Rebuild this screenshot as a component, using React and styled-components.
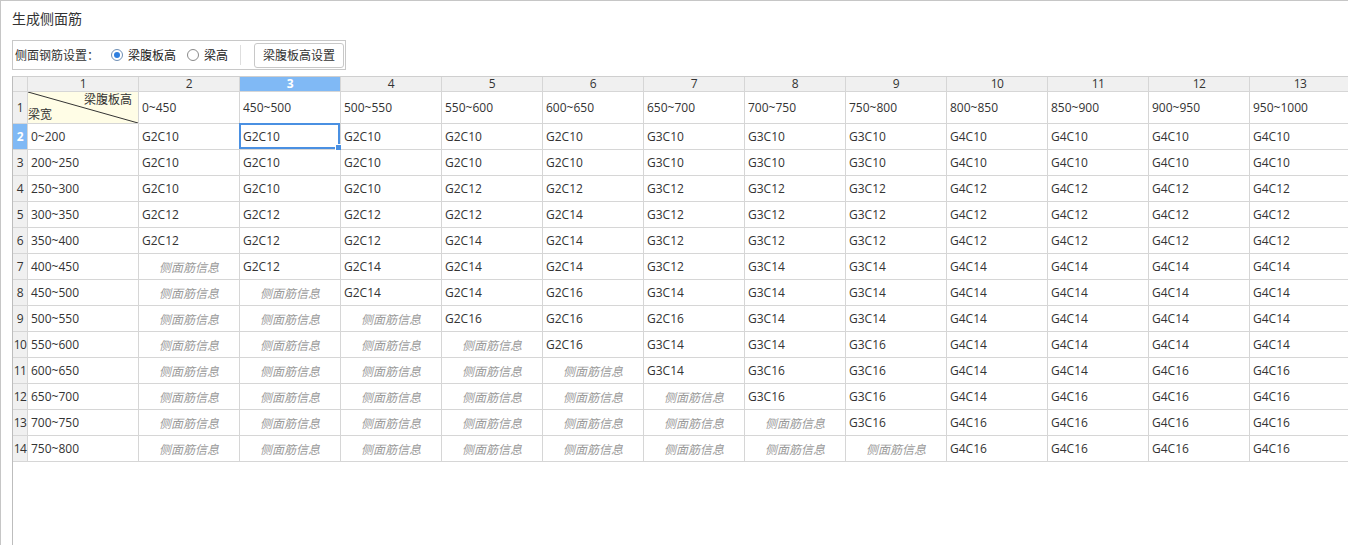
import React from "react";
import styled, { createGlobalStyle } from "styled-components";

const GlobalStyle = createGlobalStyle`
  html, body {
    margin: 0;
    padding: 0;
    background: #fff;
  }
  body {
    font-family: "Open Sans", "Noto Sans CJK SC", sans-serif;
    font-size: 12px;
    color: #333;
  }
  * { box-sizing: border-box; }
`;

const Root = styled.div`
  height: 100vh;
  display: flex;
  flex-direction: column;
  border-top: 1px solid #c6c6c6;
  border-left: 1px solid #c6c6c6;
  padding-left: 11px;
  overflow: hidden;
`;

const Title = styled.div`
  padding-top: 8px;
  line-height: 20px;
  font-size: 14px;
  color: #333;
`;

const Toolbar = styled.div`
  margin-top: 11px;
  align-self: flex-start;
  display: flex;
  align-items: center;
  height: 30px;
  padding: 0 1px 0 2px;
  border: 1px solid #c8c8c8;
`;

const Label = styled.span`
  color: #333;
  margin-right: 12px;
`;

const RadioOption = styled.label`
  display: flex;
  align-items: center;
  gap: 5px;
  margin-right: ${(p) => p.$gap || 0}px;
  color: #222;
`;

const RadioDot = styled.span`
  width: 12px;
  height: 12px;
  border-radius: 50%;
  border: 1px solid ${(p) => (p.$checked ? "#6f8fb5" : "#8a8a8a")};
  background: #fff;
  display: flex;
  align-items: center;
  justify-content: center;
  &::after {
    content: "";
    width: 6px;
    height: 6px;
    border-radius: 50%;
    background: ${(p) => (p.$checked ? "#2f7fdf" : "transparent")};
  }
`;

const Divider = styled.span`
  width: 1px;
  height: 20px;
  background: #dedede;
  margin: 0 13px 0 12px;
`;

const Button = styled.button`
  height: 25px;
  padding: 0 8px;
  border: 1px solid #c8c8c8;
  border-radius: 3px;
  background: #fff;
  font: inherit;
  color: #333;
`;

const Sheet = styled.div`
  flex: 1;
  margin-top: 6px;
  border-left: 1px solid #bdbdbd;
  border-top: 1px solid #cfcfcf;
  overflow: hidden;
`;

const Table = styled.div`
  display: grid;
  grid-template-columns: 15px 111px repeat(12, 101px);
  grid-template-rows: 15px 32px repeat(13, 26px);
  width: max-content;
`;

const Cell = styled.div`
  position: relative;
  display: flex;
  align-items: center;
  justify-content: ${(p) => (p.$center ? "center" : "flex-start")};
  padding: 0 3px;
  border-right: 1px solid #d6d6d6;
  border-bottom: 1px solid #d6d6d6;
  white-space: nowrap;
  color: ${(p) => (p.$muted ? "#9a9a9a" : "#333")};
  font-style: ${(p) => (p.$muted ? "italic" : "normal")};
`;

const HeadCell = styled(Cell)`
  justify-content: center;
  padding: 0;
  line-height: 14px;
  background: ${(p) => (p.$active ? "#80b9f5" : "#f0f0f0")};
  color: ${(p) => (p.$active ? "#fff" : "#333")};
  font-weight: ${(p) => (p.$active ? "bold" : "normal")};
  letter-spacing: -0.5px;
`;

const Corner = styled(Cell)`
  background: #fffde6;
  padding: 0;
  display: block;
`;

const CornerTop = styled.span`
  position: absolute;
  right: 6px;
  top: 1px;
  line-height: 14px;
`;

const CornerBottom = styled.span`
  position: absolute;
  left: 0;
  bottom: 1px;
  line-height: 14px;
`;

const Diagonal = styled.svg`
  position: absolute;
  inset: 0;
  width: 100%;
  height: 100%;
`;

const Selection = styled.div`
  position: absolute;
  inset: -1px 0 0 -1px;
  border: 2px solid #4a90e2;
  pointer-events: none;
  &::after {
    content: "";
    position: absolute;
    right: -4px;
    bottom: -4px;
    width: 5px;
    height: 5px;
    background: #4a90e2;
    border: 1px solid #fff;
  }
`;

const P = null;
const widths = ["0~200", "200~250", "250~300", "300~350", "350~400", "400~450", "450~500", "500~550", "550~600", "600~650", "650~700", "700~750", "750~800"];
const heights = ["0~450", "450~500", "500~550", "550~600", "600~650", "650~700", "700~750", "750~800", "800~850", "850~900", "900~950", "950~1000"];

const data = [
  ["G2C10", "G2C10", "G2C10", "G2C10", "G2C10", "G3C10", "G3C10", "G3C10", "G4C10", "G4C10", "G4C10", "G4C10"],
  ["G2C10", "G2C10", "G2C10", "G2C10", "G2C10", "G3C10", "G3C10", "G3C10", "G4C10", "G4C10", "G4C10", "G4C10"],
  ["G2C10", "G2C10", "G2C10", "G2C12", "G2C12", "G3C12", "G3C12", "G3C12", "G4C12", "G4C12", "G4C12", "G4C12"],
  ["G2C12", "G2C12", "G2C12", "G2C12", "G2C14", "G3C12", "G3C12", "G3C12", "G4C12", "G4C12", "G4C12", "G4C12"],
  ["G2C12", "G2C12", "G2C12", "G2C14", "G2C14", "G3C12", "G3C12", "G3C12", "G4C12", "G4C12", "G4C12", "G4C12"],
  [P, "G2C12", "G2C14", "G2C14", "G2C14", "G3C12", "G3C14", "G3C14", "G4C14", "G4C14", "G4C14", "G4C14"],
  [P, P, "G2C14", "G2C14", "G2C16", "G3C14", "G3C14", "G3C14", "G4C14", "G4C14", "G4C14", "G4C14"],
  [P, P, P, "G2C16", "G2C16", "G2C16", "G3C14", "G3C14", "G4C14", "G4C14", "G4C14", "G4C14"],
  [P, P, P, P, "G2C16", "G3C14", "G3C14", "G3C16", "G4C14", "G4C14", "G4C14", "G4C14"],
  [P, P, P, P, P, "G3C14", "G3C16", "G3C16", "G4C14", "G4C14", "G4C16", "G4C16"],
  [P, P, P, P, P, P, "G3C16", "G3C16", "G4C14", "G4C16", "G4C16", "G4C16"],
  [P, P, P, P, P, P, P, "G3C16", "G4C16", "G4C16", "G4C16", "G4C16"],
  [P, P, P, P, P, P, P, P, "G4C16", "G4C16", "G4C16", "G4C16"],
];

const activeCol = 3;
const activeRow = 2;

export default function App() {
  return (
    <>
      <GlobalStyle />
      <Root>
        <Title>生成侧面筋</Title>
        <Toolbar>
          <Label>侧面钢筋设置：</Label>
          <RadioOption $gap={11}>
            <RadioDot $checked />
            梁腹板高
          </RadioOption>
          <RadioOption>
            <RadioDot />
            梁高
          </RadioOption>
          <Divider />
          <Button>梁腹板高设置</Button>
        </Toolbar>
        <Sheet>
          <Table>
            <HeadCell />
            {Array.from({ length: 13 }, (_, i) => (
              <HeadCell key={i} $active={i + 1 === activeCol}>
                {i + 1}
              </HeadCell>
            ))}

            <HeadCell>1</HeadCell>
            <Corner>
              <Diagonal viewBox="0 0 110 31" preserveAspectRatio="none">
                <line x1="0" y1="0" x2="110" y2="31" stroke="#333" strokeWidth="1" />
              </Diagonal>
              <CornerTop>梁腹板高</CornerTop>
              <CornerBottom>梁宽</CornerBottom>
            </Corner>
            {heights.map((h) => (
              <Cell key={h}>{h}</Cell>
            ))}

            {widths.map((w, r) => (
              <React.Fragment key={w}>
                <HeadCell $active={r + 2 === activeRow}>{r + 2}</HeadCell>
                <Cell>{w}</Cell>
                {data[r].map((v, c) =>
                  v ? (
                    <Cell key={c}>
                      {v}
                      {r + 2 === activeRow && c + 2 === activeCol && <Selection />}
                    </Cell>
                  ) : (
                    <Cell key={c} $center $muted>
                      侧面筋信息
                    </Cell>
                  )
                )}
              </React.Fragment>
            ))}
          </Table>
        </Sheet>
      </Root>
    </>
  );
}
